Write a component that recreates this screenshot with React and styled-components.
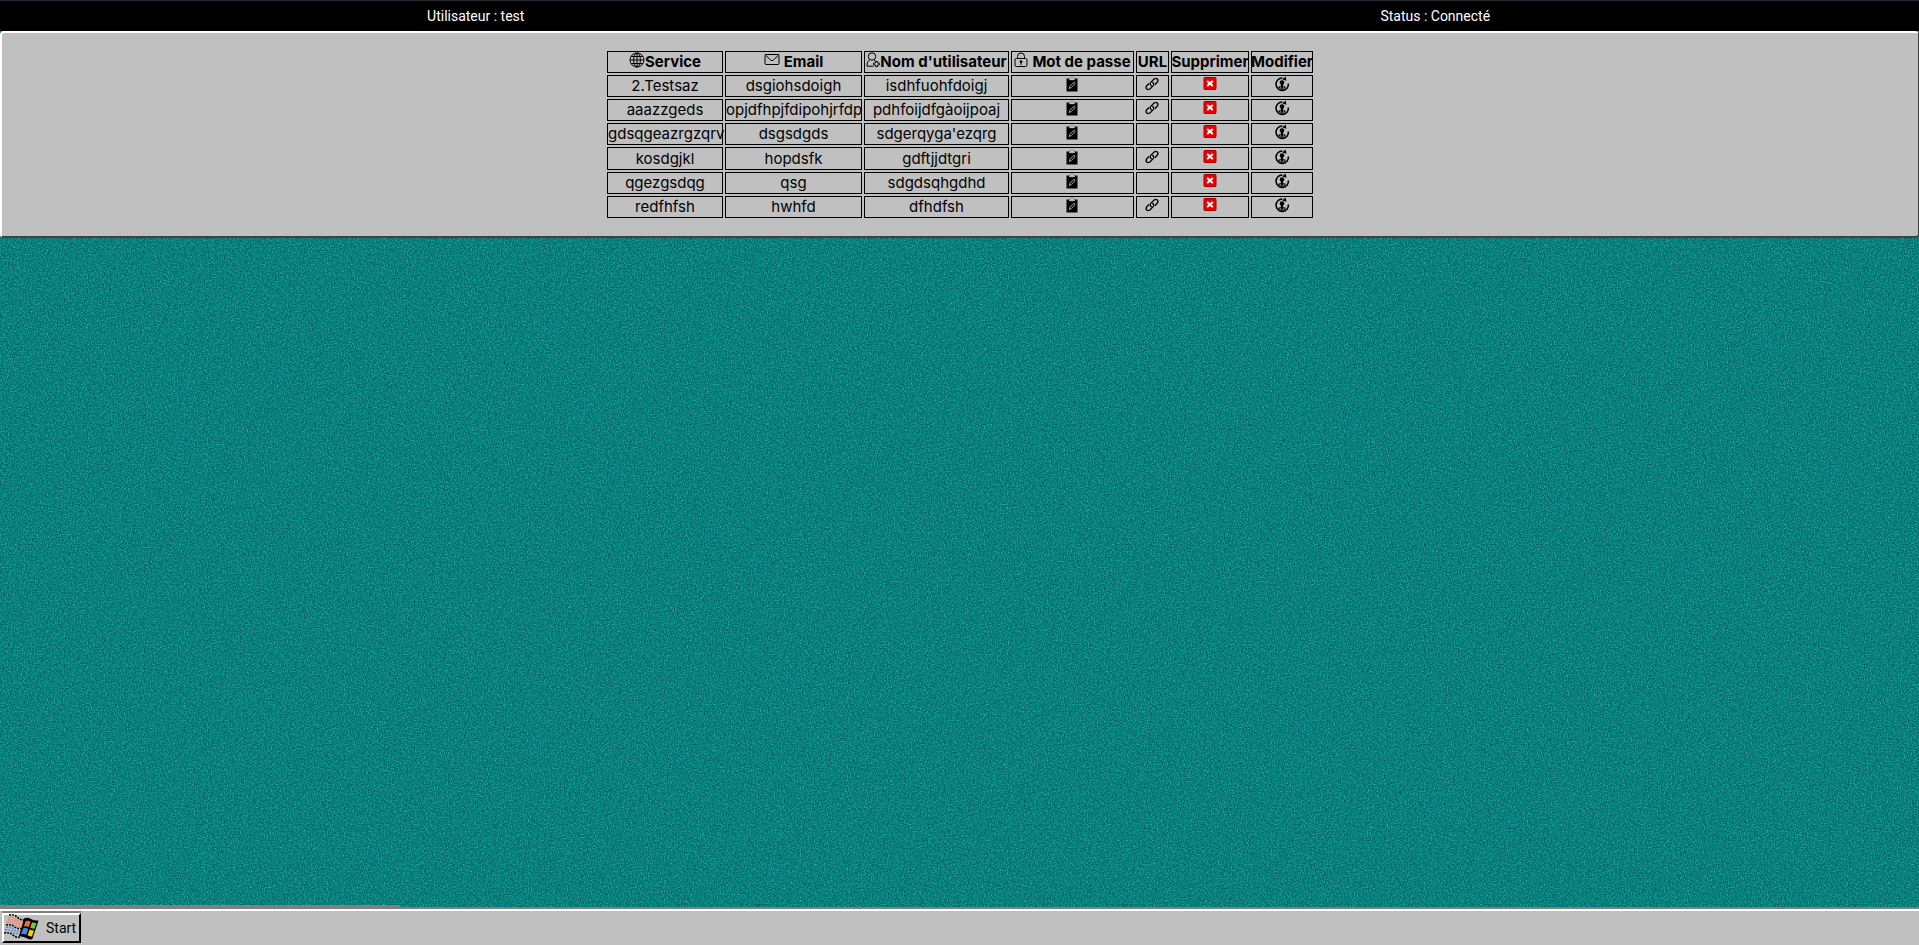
import React from "react";
import styled, { createGlobalStyle } from "styled-components";

const GlobalStyle = createGlobalStyle`
  * { box-sizing: border-box; }
  html, body, #root { height: 100%; }
  body {
    margin: 0;
    background: #008080;
    color: #000;
    font-family: Roboto, "Liberation Sans", sans-serif;
    font-size: 14px;
  }
  button { font: inherit; color: inherit; }
`;

const Desktop = styled.div`
  position: relative;
  isolation: isolate;
  min-height: 100%;
  display: flex;
  flex-direction: column;
`;

const Texture = styled.svg`
  position: absolute;
  inset: 0;
  z-index: -1;
  width: 100%;
  height: 100%;
`;

const StatusBar = styled.header`
  display: grid;
  grid-template-columns: 1fr 1fr;
  height: 31px;
  align-items: center;
  text-align: center;
  color: #fff;
  background: #000;
  border-top: 1px solid #2b2a33;
  line-height: 30px;
`;

const StatusItem = styled.span`
  padding-right: 8px;
`;

const Panel = styled.main`
  padding: 16px;
  display: flex;
  justify-content: center;
  background: #c0c0c0;
  border: 2px solid #fff;
  border-right: 1px solid #404040;
  border-bottom-color: #404040;
  border-radius: 4px;
`;

const Table = styled.table`
  width: 710px;
  height: 171px;
  table-layout: fixed;
  border-spacing: 2px;
  font-family: Inter, sans-serif;
  font-size: 15px;
  line-height: 20px;
  text-align: center;
`;

const Col = styled.col`
  width: ${(p) => p.$w}px;
`;

const HeadCell = styled.th`
  height: 22px;
  padding: 0;
  border: 1px solid #000;
  font-weight: 700;
  white-space: nowrap;
`;

const HeadLabel = styled.span`
  display: flex;
  justify-content: center;
  gap: ${(p) => p.$gap || 0}px;

  svg { flex: none; }
`;

const Cell = styled.td`
  height: 22px;
  padding: 0;
  border: 1px solid #000;
  white-space: nowrap;
`;

const IconButton = styled.button`
  display: block;
  height: 20px;
  margin: 0 auto;
  padding: 0 1px 4px 0;
  border: 0;
  background: none;
  cursor: pointer;

  svg { display: block; }
`;

const IconLink = styled.a`
  display: block;
  width: 17px;
  height: 20px;
  margin: 0 auto;
  color: inherit;

  svg { display: block; }
`;

const Spacer = styled.div`
  flex: 1;
`;

const Progress = styled.div`
  width: 400px;
  height: 2px;
  background: #808080;
`;

const Taskbar = styled.footer`
  height: 38px;
  padding: 4px 2px 0;
  background: #c0c0c0;
  border-top: 2px solid #808080;
  box-shadow: inset 0 2px #fff;
`;

const StartButton = styled.button`
  display: flex;
  align-items: center;
  gap: 7px;
  width: 79px;
  height: 30px;
  padding: 0;
  background: #c0c0c0;
  border: 2px solid #000;
  border-top-color: #fff;
  border-left-color: #fff;
  box-shadow: 0 -2px #808080;

  svg { flex: none; }
`;

const Svg = ({ children, ...p }) => (
  <svg width="16" height="16" viewBox="0 0 16 16" fill="none" stroke="#000" aria-hidden="true" {...p}>
    {children}
  </svg>
);

const Globe = () => (
  <Svg>
    <circle cx="8" cy="8" r="7" />
    <ellipse cx="8" cy="8" rx="3.4" ry="7" />
    <path d="M8 1v14M1 8h14M2.2 4.5h11.6M2.2 11.5h11.6" />
  </Svg>
);

const Envelope = () => (
  <Svg>
    <rect x="1" y="2.500" width="14" height="10" rx="1" />
    <path d="M1.300 3l5.500 5.200q1.200 1 2.400 0L14.700 3" />
  </Svg>
);

const UserPlus = () => (
  <Svg width="14" viewBox="0 0 14 16">
    <circle cx="6" cy="4.500" r="3.700" />
    <path d="M3.800 8C1.500 9 1 11 1 14.200h6.500M8 8l1.500 1" />
    <path d="M9.500 9.500h2v1.500h1.800v2h-1.800v1.600h-2v-1.600H7.700v-2h1.800z" />
  </Svg>
);

const Lock = () => (
  <Svg width="14" viewBox="0 0 14 16">
    <rect x="1" y="6.500" width="12" height="8" rx="1.500" />
    <path d="M3.500 6.500V4.500a3.500 3.500 0 0 1 7 0v2" />
    <circle cx="7" cy="9.700" r="1" fill="#000" />
    <path d="M7 10v3" />
  </Svg>
);

const Clipboard = () => (
  <Svg>
    <path d="M2.500 2.500h11v13h-11z" fill="#000" stroke="none" />
    <path d="M5 4V2.300h1.500C7 .5 9 .5 9.500 2.300H11V4z" fill="#ddd" stroke="#555" strokeWidth=".6" />
    <path d="M5.300 12.500l.6-2.200 3.700-3.700q1.500-.6 1.200 1.200l-3.500 3.800z" stroke="#ccc" strokeWidth=".8" />
  </Svg>
);

const Chain = () => (
  <Svg strokeWidth="1.300" strokeLinecap="round">
    <path d="M7.400 9.600C5.800 8.700 5.900 7.200 7 6.100l2.800-2.800c2.800-2.300 5.400.4 3.400 3l-1.900 2" />
    <path d="M8.600 6.400c1.600.9 1.500 2.400.4 3.500l-2.800 2.800c-2.800 2.300-5.400-.4-3.400-3l1.900-2" />
  </Svg>
);

const Cross = () => (
  <Svg>
    <rect x="2" y="1.500" width="12" height="12" rx="1" fill="#f00000" stroke="#a00000" />
    <path d="M5.200 5l5.600 5M10.800 5l-5.600 5" stroke="#fff" strokeWidth="1.900" />
  </Svg>
);

const Refresh = () => (
  <Svg>
    <path d="M8.500 2A6.200 6.200 0 1 0 14.400 7.500" strokeWidth="1.600" />
    <path d="M8.300 3.500L11.500.5l1 4.300z" fill="#000" stroke="none" />
    <circle cx="8" cy="6.500" r="2.300" fill="#000" stroke="none" />
    <path d="M7.200 8h1.600l.3 1.700 2.900 1.300-2.600 2.500H6.600L4 11l2.900-1.300z" fill="#000" stroke="none" />
    <path d="M6.300 10.600l.7 2.400M9.700 10.600L9 13" stroke="#c0c0c0" strokeWidth=".7" />
  </Svg>
);

const WindowsLogo = () => (
  <svg width="35" height="28" viewBox="0 0 35 28" aria-hidden="true">
    <path d="M20 4.500q3.500-1.500 7 .5t7.500 1.500l-6 18q-1.500 2-5 0t-8.500-2.500z" fill="#000" />
    <path d="M21.800 7q2.500-.8 4.800.6l-1.800 5.400q-2.400-1.200-5-.4z" fill="#ff6633" />
    <path d="M28 8.200q2.200 1 4.400.8l-1.900 5.800q-2.300 0-4.300-1z" fill="#66cc44" />
    <path d="M19.200 14.300q2.600-.8 5 .4l-2 6q-2.400-1.200-5.200-.4z" fill="#3f8ce8" />
    <path d="M25.600 15.500q2.200 1 4.400 1l-2 6q-2.400 0-4.400-1.200z" fill="#ffcc00" />
    <g fill="none" strokeWidth="1.500" strokeDasharray="2 1">
      <path d="M5 1q5-1 8 2t7 3M2 11q5-1 8 1.500t8 2M0 19q6-1 9 2t7 2" stroke="#000" />
      <path d="M4.500 3.500q5-1 8 2t6 2.500M4 6q5-1 8 2t6 2M3 8.500q5-1 8 2t6 2" stroke="#ff7a55" />
      <path d="M2 13.500q5-1 7 1.500t7 2M1 16q5-1 7 1.500t7 2" stroke="#4c8ce0" />
    </g>
  </svg>
);

const columns = [
  { label: "Service", width: 116, icon: Globe },
  { label: "Email", width: 137, icon: Envelope, gap: 4 },
  { label: "Nom d'utilisateur", width: 145, icon: UserPlus },
  { label: "Mot de passe", width: 123, icon: Lock, gap: 4 },
  { label: "URL", width: 33 },
  { label: "Supprimer", width: 78 },
  { label: "Modifier", width: 62 },
];

const accounts = [
  { service: "2.Testsaz", email: "dsgiohsdoigh", user: "isdhfuohfdoigj", url: true },
  { service: "aaazzgeds", email: "opjdfhpjfdipohjrfdp", user: "pdhfoijdfgàoijpoaj", url: true },
  { service: "gdsqgeazrgzqrv", email: "dsgsdgds", user: "sdgerqyga'ezqrg", url: false },
  { service: "kosdgjkl", email: "hopdsfk", user: "gdftjjdtgri", url: true },
  { service: "qgezgsdqg", email: "qsg", user: "sdgdsqhgdhd", url: false },
  { service: "redfhfsh", email: "hwhfd", user: "dfhdfsh", url: true },
];

export default function App() {
  return (
    <>
      <GlobalStyle />
      <Desktop>
        <Texture aria-hidden="true">
          <filter id="grain" x="0" y="0" width="100%" height="100%" colorInterpolationFilters="sRGB">
            <feTurbulence type="fractalNoise" baseFrequency="0.7" numOctaves="2" seed="4" />
            <feColorMatrix values="0.4 0 0 0 -0.18  0.5 0 0 0 0.25  0.5 0 0 0 0.24  0 0 0 0 1" />
          </filter>
          <rect width="100%" height="100%" filter="url(#grain)" />
        </Texture>
        <StatusBar>
          <StatusItem>Utilisateur : test</StatusItem>
          <StatusItem>Status : Connecté</StatusItem>
        </StatusBar>
        <Panel>
          <Table>
            <colgroup>
              {columns.map((c) => <Col key={c.label} $w={c.width} />)}
            </colgroup>
            <thead>
              <tr>
                {columns.map(({ label, icon: Icon, gap }) => (
                  <HeadCell key={label} scope="col">
                    <HeadLabel $gap={gap}>{Icon && <Icon />}{label}</HeadLabel>
                  </HeadCell>
                ))}
              </tr>
            </thead>
            <tbody>
              {accounts.map((a) => (
                <tr key={a.service}>
                  <Cell>{a.service}</Cell>
                  <Cell>{a.email}</Cell>
                  <Cell>{a.user}</Cell>
                  <Cell><IconButton type="button" aria-label="Copier le mot de passe"><Clipboard /></IconButton></Cell>
                  <Cell>{a.url && <IconLink href="#" aria-label="Ouvrir l'URL"><Chain /></IconLink>}</Cell>
                  <Cell><IconButton type="button" aria-label="Supprimer"><Cross /></IconButton></Cell>
                  <Cell><IconButton type="button" aria-label="Modifier"><Refresh /></IconButton></Cell>
                </tr>
              ))}
            </tbody>
          </Table>
        </Panel>
        <Spacer />
        <Progress />
        <Taskbar>
          <StartButton type="button"><WindowsLogo />Start</StartButton>
        </Taskbar>
      </Desktop>
    </>
  );
}
